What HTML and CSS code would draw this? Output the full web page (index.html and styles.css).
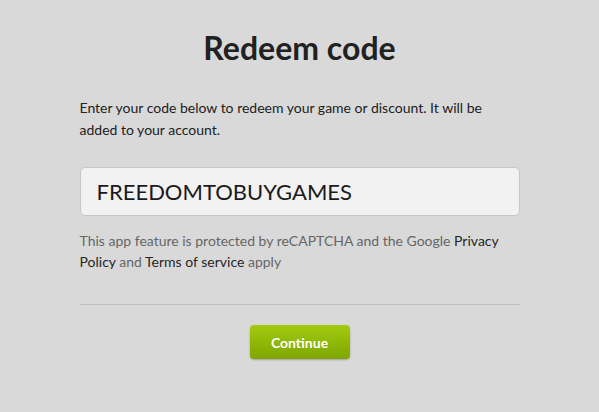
FILE: index.html
```html
<!DOCTYPE html>
<html>
<head>
<meta charset="utf-8">
<link rel="stylesheet" href="styles.css">
</head>
<body>
<main class="page">
  <h1 class="title">Redeem code</h1>
  <p class="intro">Enter your code below to redeem your game or discount. It will be added to your account.</p>
  <div class="field">FREEDOMTOBUYGAMES</div>
  <p class="note">This app feature is protected by reCAPTCHA and the Google <span class="link">Privacy</span> <span class="link">Policy</span> and <span class="link">Terms of service</span> apply</p>
  <hr class="divider">
  <div class="actions"><button class="btn">Continue</button></div>
</main>
</body>
</html>
```
FILE: styles.css
```css
html, body { margin: 0; padding: 0; }
body {
  background: #d9d9d9;
  font-family: Lato, "Liberation Sans", sans-serif;
  width: 599px;
  height: 412px;
  overflow: hidden;
}
.page {
  width: 440px;
  margin: 0 auto;
  padding-top: 27px;
}
.title {
  margin: 0;
  text-align: center;
  font-size: 32px;
  font-weight: 700;
  line-height: 42px;
  color: #212121;
}
.intro {
  margin: 28px 0 0;
  font-size: 14px;
  line-height: 22px;
  color: #212121;
}
.field {
  margin-top: 26px;
  height: 49px;
  box-sizing: border-box;
  border: 1px solid #c6c6c6;
  border-radius: 5px;
  background: #f2f2f2;
  padding: 0 16px;
  font-size: 22px;
  line-height: 47px;
  color: #1a1a1a;
}
.note {
  margin: 14px 0 0;
  font-size: 14px;
  line-height: 21px;
  color: #666;
}
.link { color: #262626; }
.divider {
  margin: 32px 0 0;
  border: 0;
  border-top: 1px solid #bdbdbd;
}
.actions {
  display: flex;
  justify-content: center;
  margin-top: 20px;
}
.btn {
  width: 100px;
  height: 34px;
  border: 0;
  border-radius: 4px;
  background: linear-gradient(#a2cb0e, #7ea600);
  color: #fff;
  font-family: Lato, "Liberation Sans", sans-serif;
  font-size: 14px;
  font-weight: 700;
  box-shadow: 0 1px 2px rgba(0,0,0,0.25);
}
```
